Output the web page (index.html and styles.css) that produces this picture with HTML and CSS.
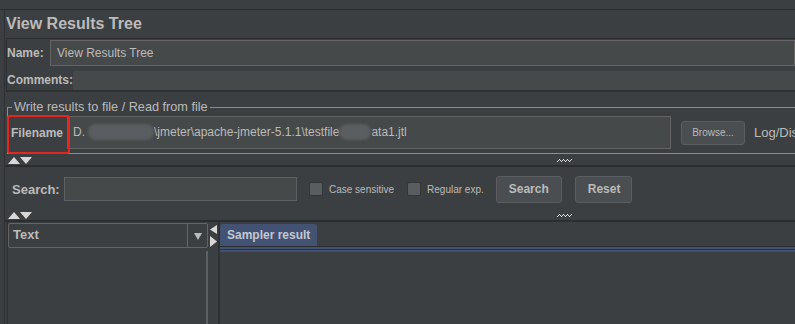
FILE: index.html
```html
<!DOCTYPE html>
<html lang="en">
<head>
    <meta charset="UTF-8">
    <title>View Results Tree</title>
    <link rel="stylesheet" href="styles.css">
</head>
<body>
    <div class="top-strip"></div>
    <div class="panel">
        <h1 class="title">View Results Tree</h1>

        <!-- name / comments -->
        <div class="name-box">
            <div class="name-row">
                <span class="label">Name:</span>
                <div class="field name-field">View Results Tree</div>
            </div>
            <div class="comments-row">
                <span class="label">Comments:</span>
                <div class="field flat"></div>
            </div>
        </div>

        <!-- write results to file -->
        <fieldset class="file-box">
            <legend>Write results to file / Read from file</legend>
            <div class="file-row">
                <span class="label filename-label">Filename</span>
                <div class="field path-field">D.<span class="blur blur-1"></span>\jmeter\apache-jmeter-5.1.1\testfile<span class="blur blur-2"></span>ata1.jtl</div>
                <button class="btn btn-small">Browse...</button>
                <span class="label log-label">Log/Display Only:</span>
                <div class="mark"></div>
            </div>
        </fieldset>

        <div class="divider">
            <svg class="arrows" width="24" height="7" viewBox="0 0 24 7">
                <polygon points="0,7 6,0 12,7" fill="#d8d8d8"/>
                <polygon points="12,0 24,0 18,7" fill="#d8d8d8"/>
            </svg>
            <svg class="grip" width="15" height="4" viewBox="0 0 15 4">
                <g fill="#e0e0e0">
                    <rect x="0" y="2" width="1" height="1"/><rect x="1" y="1" width="1" height="1"/>
                    <rect x="2" y="0" width="1" height="1"/><rect x="3" y="1" width="1" height="1"/>
                    <rect x="4" y="2" width="1" height="1"/><rect x="5" y="1" width="1" height="1"/>
                    <rect x="6" y="0" width="1" height="1"/><rect x="7" y="1" width="1" height="1"/>
                    <rect x="8" y="2" width="1" height="1"/><rect x="9" y="1" width="1" height="1"/>
                    <rect x="10" y="0" width="1" height="1"/><rect x="11" y="1" width="1" height="1"/>
                    <rect x="12" y="2" width="1" height="1"/><rect x="13" y="1" width="1" height="1"/>
                    <rect x="14" y="0" width="1" height="1"/>
                </g>
            </svg>
        </div>

        <!-- search -->
        <div class="search-row">
            <span class="label">Search:</span>
            <div class="field search-field"></div>
            <span class="check"></span>
            <span class="check-text">Case sensitive</span>
            <span class="check"></span>
            <span class="check-text">Regular exp.</span>
            <button class="btn">Search</button>
            <button class="btn">Reset</button>
        </div>

        <div class="divider divider-low">
            <svg class="arrows" width="24" height="7" viewBox="0 0 24 7">
                <polygon points="0,7 6,0 12,7" fill="#d8d8d8"/>
                <polygon points="12,0 24,0 18,7" fill="#d8d8d8"/>
            </svg>
            <svg class="grip" width="15" height="4" viewBox="0 0 15 4">
                <g fill="#e0e0e0">
                    <rect x="0" y="2" width="1" height="1"/><rect x="1" y="1" width="1" height="1"/>
                    <rect x="2" y="0" width="1" height="1"/><rect x="3" y="1" width="1" height="1"/>
                    <rect x="4" y="2" width="1" height="1"/><rect x="5" y="1" width="1" height="1"/>
                    <rect x="6" y="0" width="1" height="1"/><rect x="7" y="1" width="1" height="1"/>
                    <rect x="8" y="2" width="1" height="1"/><rect x="9" y="1" width="1" height="1"/>
                    <rect x="10" y="0" width="1" height="1"/><rect x="11" y="1" width="1" height="1"/>
                    <rect x="12" y="2" width="1" height="1"/><rect x="13" y="1" width="1" height="1"/>
                    <rect x="14" y="0" width="1" height="1"/>
                </g>
            </svg>
        </div>

        <!-- results split -->
        <div class="split">
            <div class="tree-side">
                <div class="combo">
                    <span class="combo-text">Text</span>
                    <span class="combo-arrow">
                        <svg width="8" height="8" viewBox="0 0 8 8"><polygon points="0,1 8,1 4,8" fill="#bbbbbb"/></svg>
                    </span>
                </div>
                <div class="tree-list"></div>
            </div>
            <div class="split-bar">
                <svg width="7" height="22" viewBox="0 0 7 22">
                    <polygon points="7,0 7,9 0,4.5" fill="#d8d8d8"/>
                    <polygon points="0,11 0,22 7,16.5" fill="#d8d8d8"/>
                </svg>
            </div>
            <div class="result-side">
                <div class="tabs">
                    <div class="tab">Sampler result</div>
                </div>
                <div class="tab-line"></div>
            </div>
        </div>
    </div>
</body>
</html>
```

FILE: styles.css
```css
* {
    box-sizing: border-box;
}

body {
    margin: 0;
    width: 795px;
    height: 324px;
    overflow: hidden;
    background: #3c3f41;
    color: #bbbbbb;
    font-family: "Liberation Sans", Arial, sans-serif;
    font-size: 12px;
}

.top-strip {
    height: 10px;
    border-bottom: 1px solid #2b2d2e;
}

.panel {
    margin-left: 4px;
    border-left: 1px solid #2e3032;
    height: 314px;
}

.title {
    margin: 0;
    height: 28px;
    padding-left: 1px;
    font-size: 16px;
    font-weight: bold;
    line-height: 27px;
}

.label {
    font-weight: bold;
    white-space: nowrap;
}

.field {
    background: #45494a;
    border: 1px solid #646464;
    color: #bbbbbb;
    white-space: nowrap;
}

.field.flat {
    border: none;
}

/* name / comments */
.name-box {
    margin-left: 1px;
    border-top: 1px solid #2b2d2e;
    border-left: 1px solid #2b2d2e;
    border-bottom: 2px solid #2e3032;
    padding-top: 1px;
}

.name-row {
    display: flex;
    align-items: center;
    height: 26px;
}

.name-row .label {
    width: 43px;
}

.name-field {
    flex: 1;
    height: 26px;
    line-height: 24px;
    padding-left: 6px;
}

.comments-row {
    display: flex;
    align-items: center;
    height: 20px;
    margin-top: 4px;
}

.comments-row .label {
    width: 66px;
}

.comments-row .field {
    flex: 1;
    height: 19px;
}

/* file box */
.file-box {
    margin: 9px 0 0 2px;
    padding: 0 0 0 2px;
    border: 1px solid #8c8c8c;
    border-right: none;
    height: 53px;
}

.file-box legend {
    margin-left: 2px;
    padding: 0 2px;
    font-size: 12.7px;
    line-height: 12px;
}

.file-row {
    position: relative;
    display: flex;
    align-items: center;
    margin-top: 3px;
    white-space: nowrap;
}

.filename-label {
    width: 57px;
    padding-left: 1px;
}

.path-field {
    flex: 0 0 604px;
    height: 33px;
    line-height: 31px;
    padding-left: 5px;
    overflow: hidden;
}

.blur {
    display: inline-block;
    vertical-align: middle;
    height: 16px;
    margin-top: -2px;
    background: #5b5e60;
    border-radius: 8px;
    filter: blur(1.5px);
}

.blur-1 {
    width: 66px;
    margin-left: 3px;
}

.blur-2 {
    width: 32px;
}

.mark {
    position: absolute;
    left: -3px;
    top: -1px;
    width: 63px;
    height: 39px;
    border: 2px solid #e5261f;
    border-radius: 3px;
}

.btn {
    height: 24px;
    padding: 0 8px;
    background: #4a4e50;
    border: 1px solid #5b5e60;
    border-radius: 3px;
    color: #bbbbbb;
    font-family: inherit;
    font-size: 12px;
    font-weight: bold;
}

.btn-small {
    margin-left: 10px;
    width: 64px;
    font-size: 10px;
    font-weight: normal;
}

.log-label {
    margin-left: 9px;
    font-weight: normal;
    font-size: 13px;
}

/* split dividers */
.divider {
    display: flex;
    align-items: flex-start;
    height: 13px;
    border-bottom: 2px solid #2b2d2e;
    padding: 3px 0 0 3px;
}

.divider-low {
    height: 11px;
    padding-top: 1px;
}

.grip {
    margin: 2px 0 0 525px;
}

.search-row {
    display: flex;
    align-items: center;
    height: 44px;
    padding-left: 7px;
}

.search-row .label {
    width: 52px;
    font-size: 13px;
}

.search-field {
    width: 233px;
    height: 24px;
    border-color: #5e6060;
}

.check {
    width: 14px;
    height: 14px;
    margin-left: 12px;
    background: #5a5d5f;
    border: 1px solid #333537;
    border-radius: 2px;
}

.check-text {
    margin-left: 6px;
    font-size: 10px;
}

.check-text + .check {
    margin-left: 13px;
}

.search-row .btn {
    height: 27px;
    margin-left: 12px;
    padding: 0 12px;
}

.search-row .btn + .btn {
    margin-left: 13px;
    width: 57px;
}

/* results split */
.split {
    display: flex;
    height: 104px;
}

.tree-side {
    width: 201px;
    margin-left: 2px;
    border-left: 1px solid #2e3032;
    display: flex;
    flex-direction: column;
}

.combo {
    display: flex;
    height: 25px;
    margin-top: 1px;
    border: 1px solid #646464;
    border-radius: 2px;
}

.combo-text {
    flex: 1;
    font-weight: bold;
    font-size: 13px;
    line-height: 22px;
    padding-left: 4px;
}

.combo-arrow {
    width: 20px;
    border-left: 1px solid #646464;
    display: flex;
    align-items: center;
    justify-content: center;
}

.tree-list {
    flex: 1;
    margin-top: 3px;
    border-right: 2px solid #5e6162;
}

.split-bar {
    width: 12px;
    padding: 3px 0 0 2px;
    border-right: 2px solid #2e3032;
}

.result-side {
    flex: 1;
}

.tabs {
    display: flex;
    height: 25px;
    padding-top: 2px;
    border-bottom: 1px solid #2b2d2e;
}

.tab {
    width: 97px;
    padding-left: 7px;
    background: #435273;
    border-radius: 3px 3px 0 0;
    font-weight: bold;
    font-size: 12px;
    line-height: 22px;
    white-space: nowrap;
    color: #c4c8d0;
}

.tab-line {
    height: 5px;
    border-top: 2px solid #435273;
    border-bottom: 2px solid #435273;
    background: #2f3335;
}
```
